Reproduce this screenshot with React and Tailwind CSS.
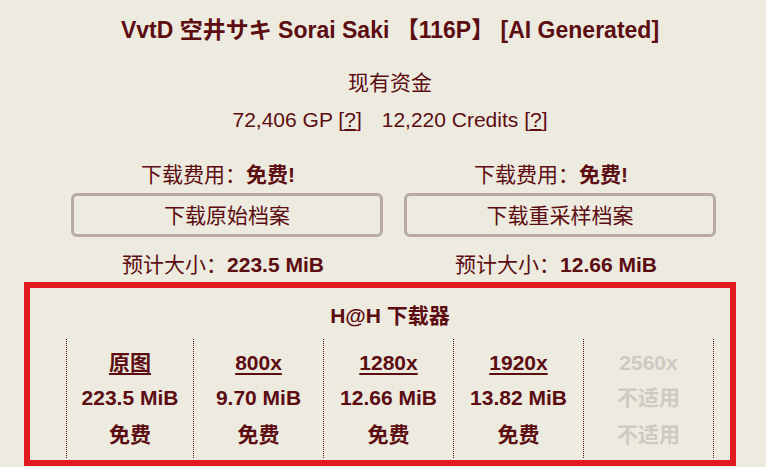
import React from 'react';

const columns = [
  { label: '原图', size: '223.5 MiB', cost: '免费', w: 'w-[127px]' },
  { label: '800x', size: '9.70 MiB', cost: '免费', w: 'w-[130px]' },
  { label: '1280x', size: '12.66 MiB', cost: '免费', w: 'w-[130px]' },
  { label: '1920x', size: '13.82 MiB', cost: '免费', w: 'w-[130px]' },
  { label: '2560x', size: '不适用', cost: '不适用', w: 'w-[131px] border-r', disabled: true },
];

const ArchiveColumn = ({ button, size }) => (
  <div className="w-[333px] flex flex-col items-center">
    <div className="h-[28px] leading-[28px] pr-[18px]">
      下载费用：<strong className="font-bold">免费!</strong>
    </div>
    <button className="mt-[4px] w-[312px] h-[44px] border-[3px] border-[#B7AAA7] rounded-[6px] text-[21px] leading-none">
      {button}
    </button>
    <div className="mt-[14px] h-[28px] leading-[28px] pr-[8px]">
      预计大小：<strong className="font-bold">{size}</strong>
    </div>
  </div>
);

const App = () => {
  return (
    <div className="w-[766px] h-[467px] overflow-hidden bg-[#EDEADF] text-[#5C0D11] text-[21px] [font-family:'Liberation_Sans','Noto_Sans_CJK_SC',sans-serif]">
      {/* Title and funds */}
      <div className="pl-[14px] flex flex-col items-center">
        <h1 className="mt-[16px] h-[28px] leading-[28px] text-[23px] font-bold whitespace-nowrap">
          VvtD 空井サキ Sorai Saki 【116P】 [AI Generated]
        </h1>
        <div className="mt-[25px] h-[28px] leading-[28px]">现有资金</div>
        <div className="mt-[9px] h-[28px] leading-[28px] whitespace-nowrap">
          72,406 GP [<span className="underline">?</span>]
          <span className="ml-[20px]">12,220 Credits [<span className="underline">?</span>]</span>
        </div>
      </div>

      {/* Archive download options */}
      <div className="mt-[27px] pl-[21px] flex justify-center">
        <ArchiveColumn button="下载原始档案" size="223.5 MiB" />
        <ArchiveColumn button="下载重采样档案" size="12.66 MiB" />
      </div>

      {/* H@H downloader */}
      <div className="mt-[3px] ml-[24px] w-[712px] h-[184px] border-[6px] border-[#E31B20]">
        <div className="pl-[20px] flex flex-col items-center">
          <div className="mt-[14px] h-[28px] leading-[28px] font-bold">H@H 下载器</div>
          <div className="mt-[9px] flex font-bold">
            {columns.map((c) => (
              <div
                key={c.label}
                className={`${c.w} h-[119px] border-l border-dotted border-[#5C0D11] flex flex-col items-center ${c.disabled ? 'text-[#CDCAC2]' : ''}`}
              >
                <div className={`mt-[10px] h-[28px] leading-[28px] ${c.disabled ? '' : 'underline underline-offset-[3px]'}`}>
                  {c.label}
                </div>
                <div className="mt-[7px] h-[28px] leading-[28px]">{c.size}</div>
                <div className="mt-[9px] h-[28px] leading-[28px]">{c.cost}</div>
              </div>
            ))}
          </div>
        </div>
      </div>
    </div>
  );
};

export default App;
